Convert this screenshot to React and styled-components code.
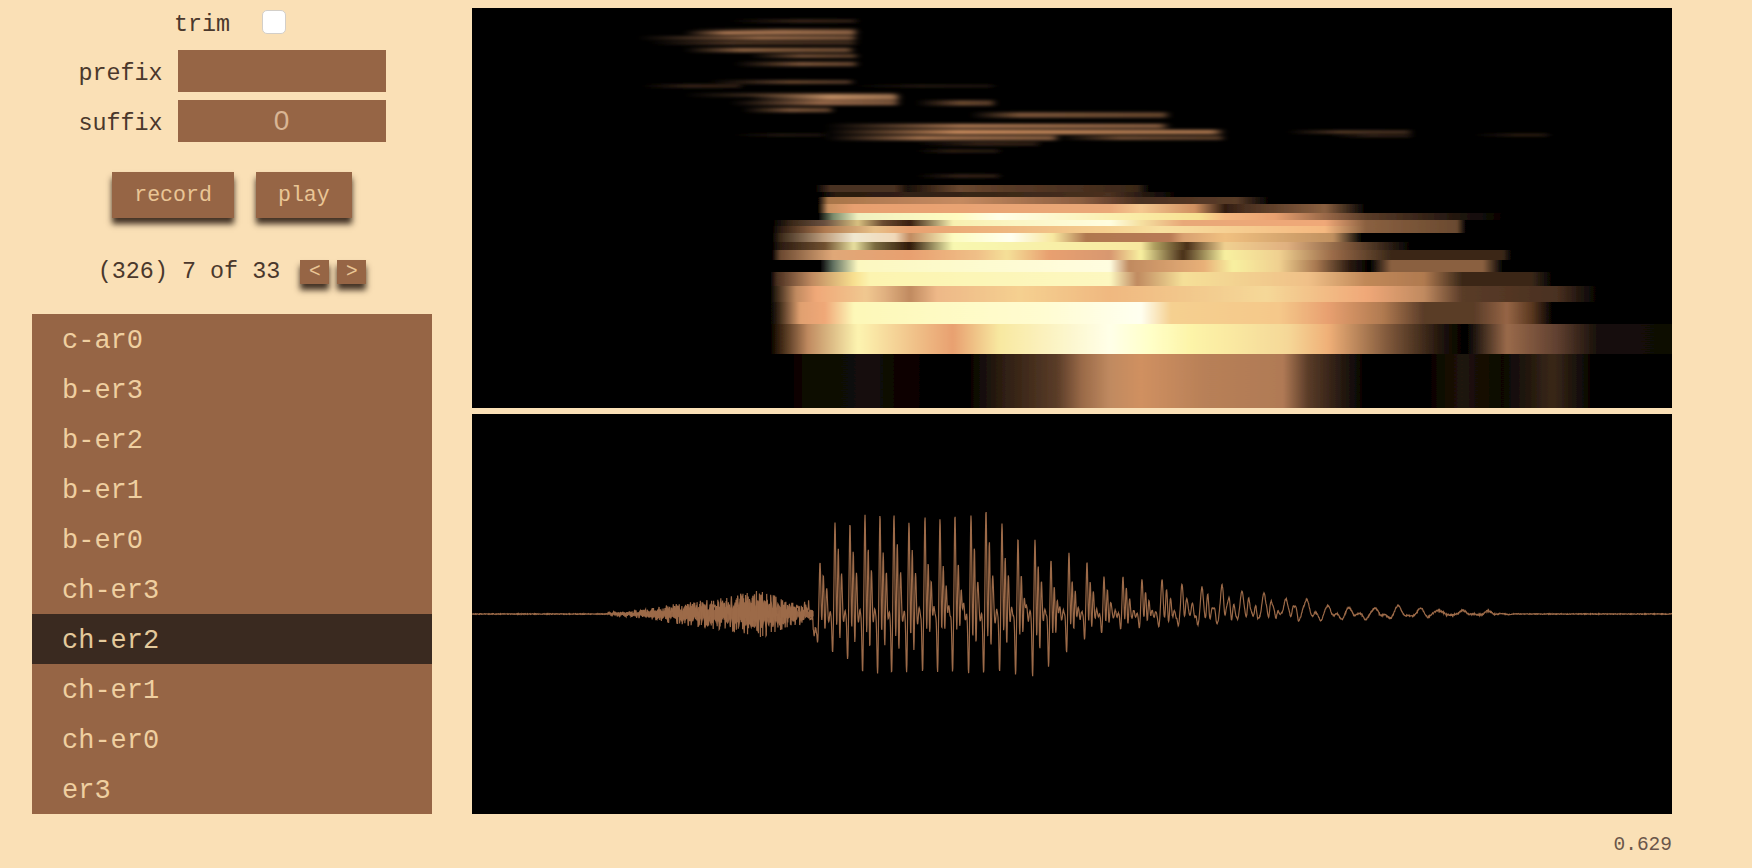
import React, { useMemo } from "react";
import styled, { createGlobalStyle } from "styled-components";

const GlobalStyle = createGlobalStyle`
  html, body {
    margin: 0;
    height: 100%;
    background: #fae0b6;
    overflow: hidden;
  }
  body {
    font-family: "Liberation Mono", monospace;
    color: #4a382c;
  }
`;

const Page = styled.div`
  display: flex;
  width: 1752px;
  height: 868px;
`;

const Sidebar = styled.aside`
  flex: none;
  width: 472px;
  box-sizing: border-box;
  padding: 10px 40px 0 32px;
  display: flex;
  flex-direction: column;
  align-items: stretch;
`;

const TrimRow = styled.label`
  display: flex;
  align-items: center;
  justify-content: center;
  gap: 32px;
  height: 24px;
  padding-right: 4px;
  font-size: 23.4px;
`;

const LabelText = styled.span`
  padding-top: 5px;
`;

const Check = styled.input.attrs({ type: "checkbox" })`
  appearance: none;
  box-sizing: border-box;
  width: 24px;
  height: 24px;
  margin: 0;
  background: #fff;
  border: 1px solid #d3cfc9;
  border-radius: 5px;
`;

const Fields = styled.div`
  display: flex;
  flex-direction: column;
  gap: 8px;
  margin-top: 16px;
`;

const FieldRow = styled.label`
  display: flex;
  align-items: center;
  justify-content: center;
  gap: 15px;
  font-size: 23.4px;
`;

const FieldInput = styled.input`
  box-sizing: border-box;
  width: 208px;
  height: 42px;
  border: 0;
  outline: 0;
  padding: 0;
  background: #966545;
  color: #f5d8ab;
  text-align: center;
  font-family: "Liberation Sans", sans-serif;
  font-size: 28px;
  &::placeholder {
    color: #d9b594;
    opacity: 1;
  }
`;

const Actions = styled.div`
  display: flex;
  justify-content: center;
  gap: 22px;
  margin-top: 30px;
`;

const Button = styled.button`
  height: ${(p) => (p.$small ? "24px" : "46px")};
  width: ${(p) => (p.$small ? "29px" : "auto")};
  padding: ${(p) => (p.$small ? "0" : "0 22px")};
  border: 0;
  background: #966545;
  color: #eac595;
  font-family: inherit;
  font-size: ${(p) => (p.$small ? "19.5px" : "21.6px")};
  box-shadow: 0 6px 6px rgba(45, 30, 20, 0.9);
`;

const Pager = styled.div`
  display: flex;
  align-items: center;
  justify-content: center;
  gap: 8px;
  height: 24px;
  margin-top: 42px;
  font-size: 23.4px;
`;

const PagerText = styled.span`
  margin-right: 12px;
`;

const List = styled.ul`
  list-style: none;
  margin: 30px 0 0;
  padding: 0;
  height: 500px;
  overflow: hidden;
  background: #966545;
`;

const Item = styled.li`
  height: 50px;
  line-height: 54px;
  padding-left: 30px;
  font-size: 27px;
  color: ${(p) => (p.$selected ? "#e3c99b" : "#efcfa0")};
  background: ${(p) => (p.$selected ? "#3a2a20" : "transparent")};
`;

const Main = styled.main`
  flex: none;
  width: 1200px;
  padding-top: 8px;
  display: flex;
  flex-direction: column;
  gap: 6px;
`;

const Plot = styled.svg`
  display: block;
  width: 1200px;
  height: 400px;
  background: #000;
`;

const Time = styled.div`
  margin-top: 14px;
  text-align: right;
  font-size: 19.5px;
  color: #6a564a;
`;

// page coordinates, [x, colour] per band; y runs top to bottom of the block
const BANDS = [
  [185, 7, [[815, "#000"], [830, "#4a3020"], [895, "#4a3020"], [908, "#1a1008"], [960, "#6b4830"], [1000, "#5a3c28"], [1080, "#4a3020"], [1137, "#3a2818"], [1150, "#000"]]],
  [192, 5, [[820, "#000"], [835, "#2a1a10"], [1000, "#3a2818"], [1110, "#4a3020"], [1180, "#000"]]],
  [197, 7, [[818, "#000"], [828, "#a87548"], [900, "#b88058"], [960, "#c58a60"], [1082, "#8a5d40"], [1110, "#6b4530"], [1140, "#4a3020"], [1236, "#5a3c28"], [1270, "#000"]]],
  [204, 9, [[818, "#000"], [828, "#c99060"], [854, "#e8a070"], [1110, "#eaa878"], [1141, "#f5c890"], [1195, "#d09060"], [1225, "#301c10"], [1245, "#4a3020"], [1325, "#8a6040"], [1366, "#000"]]],
  [213, 7, [[818, "#000"], [833, "#7a8a6a"], [858, "#f0f0c0"], [957, "#fffcc0"], [999, "#fffee8"], [1110, "#fbf0b0"], [1200, "#f8e090"], [1225, "#f5b880"], [1275, "#e8a070"], [1366, "#5a3c28"], [1495, "#0a0604"], [1510, "#000"]]],
  [220, 6, [[772, "#000"], [792, "#3a2818"], [825, "#6a5040"], [858, "#d8c080"], [883, "#6a4a30"], [910, "#3a2010"], [953, "#f8f0b0"], [1110, "#fffee0"], [1141, "#f5e0a0"], [1183, "#e8a878"], [1325, "#f0a878"], [1366, "#8a6040"], [1457, "#6a4a30"], [1466, "#000"]]],
  [226, 7, [[772, "#000"], [780, "#2a1a10"], [825, "#b07a50"], [875, "#e8c088"], [910, "#e8a070"], [1110, "#f5d090"], [1160, "#f8e0a0"], [1325, "#f5b880"], [1366, "#8a6040"], [1457, "#6a4a30"], [1466, "#000"]]],
  [233, 9, [[772, "#000"], [780, "#3a2818"], [825, "#c0a080"], [854, "#f0e8d0"], [895, "#f0d8b8"], [910, "#c08a60"], [953, "#fdfcc0"], [1011, "#fffff0"], [1053, "#f8e8a0"], [1086, "#b07850"], [1170, "#b87a55"], [1183, "#d8a070"], [1225, "#f0c080"], [1333, "#c09060"], [1362, "#000"]]],
  [242, 8, [[772, "#000"], [780, "#2a1a10"], [825, "#705030"], [854, "#e8e0a0"], [875, "#7a6a40"], [910, "#301808"], [953, "#f8f8b0"], [1141, "#f8e8a0"], [1154, "#b0a060"], [1187, "#4a3018"], [1225, "#f0d090"], [1287, "#e0b080"], [1350, "#7a5438"], [1412, "#000"]]],
  [250, 10, [[772, "#000"], [780, "#6a4830"], [833, "#e0a878"], [910, "#e8a070"], [978, "#f0c088"], [1007, "#f5e098"], [1049, "#e8a070"], [1110, "#d89870"], [1141, "#f8f0a0"], [1183, "#4a3018"], [1225, "#f8f0a0"], [1279, "#f0d090"], [1333, "#9a6a48"], [1391, "#3a2818"], [1503, "#3a2818"], [1512, "#000"]]],
  [260, 12, [[820, "#000"], [833, "#607060"], [858, "#fcf8c0"], [1110, "#fffde0"], [1129, "#c08a60"], [1204, "#e8b078"], [1233, "#f8f0a0"], [1279, "#f0d090"], [1316, "#a87850"], [1350, "#2a1a10"], [1370, "#000"], [1391, "#8a6040"], [1483, "#8a6040"], [1503, "#000"]]],
  [272, 14, [[770, "#000"], [777, "#4a3020"], [812, "#c08a60"], [854, "#f8e090"], [870, "#fcf4b0"], [1110, "#fdf8c0"], [1137, "#c08a60"], [1183, "#f5e098"], [1308, "#f0c088"], [1366, "#c08858"], [1424, "#b07a50"], [1462, "#3a2818"], [1532, "#3a2818"], [1553, "#000"]]],
  [286, 16, [[770, "#000"], [777, "#3a2818"], [796, "#c08a60"], [816, "#f0a878"], [866, "#f0c890"], [885, "#e0b080"], [910, "#c08a60"], [937, "#eeb888"], [1020, "#f5d090"], [1110, "#f0b880"], [1266, "#f5d898"], [1366, "#f0a878"], [1424, "#c08a60"], [1462, "#5a3c28"], [1557, "#4a3020"], [1599, "#000"]]],
  [302, 22, [[770, "#000"], [779, "#3a2818"], [800, "#e0a070"], [825, "#f0a878"], [854, "#fdf8b8"], [1040, "#fffcd0"], [1141, "#fffff0"], [1171, "#f5d090"], [1279, "#f5c88a"], [1328, "#e8a070"], [1383, "#b07a50"], [1424, "#5a3c28"], [1474, "#5a3c28"], [1507, "#966545"], [1532, "#5a3820"], [1553, "#000"]]],
  [324, 30, [[770, "#000"], [777, "#2a1808"], [808, "#c08a60"], [858, "#fdf4b0"], [916, "#f0c088"], [953, "#e8a070"], [999, "#f8e8a0"], [1110, "#ffffe8"], [1150, "#ffffc8"], [1191, "#fdf4a8"], [1287, "#f5d898"], [1328, "#f0b078"], [1391, "#7a5438"], [1445, "#1a1008"], [1466, "#000"], [1507, "#9a6a4a"], [1557, "#604030"], [1599, "#150e08"], [1672, "#100a06"]]],
  [354, 54, [[777, "#000"], [808, "#0c0805"], [875, "#140e08"], [895, "#0a0604"], [966, "#000"], [999, "#2a1c10"], [1057, "#5a3c28"], [1082, "#9a6a48"], [1110, "#c08a60"], [1141, "#d09060"], [1204, "#b88058"], [1283, "#b07a55"], [1308, "#5a3c28"], [1366, "#000"], [1424, "#000"], [1462, "#201408"], [1503, "#0a0604"], [1553, "#3a2818"], [1595, "#000"]]],
];

// soft formant streaks above the block: y, height, x start, x peak, x end, colour
const STREAKS = [
  [21, 1.5, 729, 800, 858, "#4a3020"],
  [30, 1.5, 690, 780, 858, "#6a4830"],
  [33, 2, 684, 725, 858, "#b88058"],
  [38, 2, 638, 760, 858, "#a87550"],
  [43, 1.5, 650, 730, 858, "#6a4830"],
  [50, 2.5, 684, 740, 854, "#8a6040"],
  [56, 2, 750, 800, 858, "#7a5438"],
  [64, 2.5, 734, 800, 858, "#7a5438"],
  [82, 2, 709, 790, 854, "#6a4830"],
  [86, 1.5, 642, 690, 742, "#4a3020"],
  [86, 1, 854, 920, 995, "#3a2818"],
  [95, 2, 684, 830, 900, "#8a6040"],
  [98, 2.5, 750, 830, 900, "#b58058"],
  [103, 2.5, 730, 820, 900, "#9a6a4a"],
  [103, 3, 916, 960, 995, "#6a4830"],
  [110, 2.5, 742, 790, 833, "#7a5438"],
  [115, 3, 970, 1020, 1170, "#7a5438"],
  [126, 2.5, 825, 960, 1170, "#a87550"],
  [132, 2.5, 825, 957, 1225, "#d09060"],
  [135, 1, 734, 780, 825, "#3a2818"],
  [138, 2.5, 825, 920, 1060, "#a87550"],
  [138, 2, 1060, 1120, 1225, "#7a5438"],
  [144, 1.5, 916, 980, 1040, "#4a3020"],
  [151, 1.5, 916, 950, 1000, "#3a2818"],
  [132, 1.5, 1287, 1340, 1412, "#6a4830"],
  [136, 1, 1330, 1370, 1412, "#4a3020"],
  [135, 1, 1474, 1520, 1549, "#4a3020"],
  [176, 1.5, 916, 960, 1000, "#4a3020"],
];

const Spectrogram = () => (
  <Plot viewBox="472 8 1200 400">
    <defs>
      <filter id="soft" x="-5%" y="-50%" width="110%" height="200%">
        <feGaussianBlur stdDeviation="3.5 1.5" />
      </filter>
      <filter id="edge" x="0" y="0" width="100%" height="100%">
        <feGaussianBlur stdDeviation="1 0.6" />
      </filter>
      {BANDS.map(([y, h, stops], i) => (
        <linearGradient key={i} id={`band${i}`} gradientUnits="userSpaceOnUse" x1="472" x2="1672" y1="0" y2="0">
          {stops.map(([x, c], j) => (
            <stop key={j} offset={(x - 472) / 1200} stopColor={c} />
          ))}
        </linearGradient>
      ))}
      {STREAKS.map(([y, h, a, b, c, col], i) => (
        <linearGradient key={i} id={`streak${i}`} gradientUnits="userSpaceOnUse" x1={a} x2={c} y1="0" y2="0">
          <stop offset="0" stopColor={col} stopOpacity="0" />
          <stop offset={(b - a) / (c - a)} stopColor={col} />
          <stop offset="0.97" stopColor={col} stopOpacity="0.8" />
          <stop offset="1" stopColor={col} stopOpacity="0" />
        </linearGradient>
      ))}
    </defs>
    <g filter="url(#soft)">
      {STREAKS.map(([y, h, a, b, c], i) => (
        <rect key={i} x={a} y={y - h * 0.9} width={c - a} height={h * 1.8} fill={`url(#streak${i})`} style={{ mixBlendMode: "screen" }} />
      ))}
    </g>
    <g filter="url(#edge)">
      {BANDS.map(([y, h], i) => (
        <rect key={i} x="472" y={y} width="1200" height={h} fill={`url(#band${i})`} />
      ))}
    </g>
  </Plot>
);

const PEAKS = [
  [820, 561], [835, 522], [850, 523], [865, 515], [880, 515], [894, 515], [909, 522], [925, 517], [940, 519],
  [955, 515], [971, 515], [986, 510], [1002, 523], [1018, 538], [1035, 540], [1051, 560], [1069, 553],
  [1087, 562], [1104, 577], [1123, 577], [1142, 579], [1162, 579], [1182, 584], [1202, 587], [1222, 585],
  [1242, 591], [1264, 593], [1286, 599], [1307, 600], [1328, 606], [1349, 608], [1375, 608], [1398, 606],
  [1420, 608], [1439, 609], [1462, 610], [1488, 611],
];
const DIPS = [[820, 20], [835, 38], [850, 45], [865, 58], [880, 60], [900, 58], [960, 60], [1000, 58], [1030, 65], [1061, 48], [1078, 30], [1093, 22], [1126, 15], [1200, 11], [1250, 7], [1340, 4], [1400, 3.5], [1480, 1], [1672, 0]];
const BURST = [[608, 2], [640, 4], [680, 11], [720, 16], [760, 24], [790, 13], [812, 6], [818, 0], [1672, 0]];

const lerp = (table, x) => {
  if (x <= table[0][0]) return table[0][0] === x ? table[0][1] : 0;
  for (let i = 1; i < table.length; i++) {
    if (x <= table[i][0]) {
      const [x0, y0] = table[i - 1];
      const [x1, y1] = table[i];
      return y0 + ((y1 - y0) * (x - x0)) / (x1 - x0);
    }
  }
  return 0;
};

const bump = (d, w) => Math.exp(-(d * d) / (2 * w * w));

const makeRand = (start) => {
  let seed = start;
  return () => {
    seed = (seed * 16807) % 2147483647;
    return seed / 2147483647 - 0.5;
  };
};

const buildWave = () => {
  const rand = makeRand(4242);
  const pulses = PEAKS.map(([x, y]) => ({ x, a: 614 - y, b: lerp(DIPS, x) }));
  let d = "";
  for (let x = 472; x <= 1672; x += 0.33) {
    let y = 614 + rand() * lerp(BURST, x) * 2;
    y += 16 * bump(x - 815, 2.2) - 8 * bump(x - 808, 2);
    let web = 0;
    let nearest = 99;
    for (const p of pulses) {
      const dx = x - p.x;
      nearest = Math.min(nearest, Math.abs(dx), Math.abs(dx + 3.2));
      if (Math.abs(dx) > 40) continue;
      const s = 0.75 + Math.min(2.4, Math.max(0, (p.x - 1130) / 130));
      const late = p.x > 1300 ? 0.2 : 1;
      y -= p.a * bump(dx, s);
      y -= 0.62 * late * p.a * bump(dx - 4.4 * s, s * 0.9);
      y -= 0.34 * late * p.a * bump(dx - 8.5 * s, s);
      y += p.b * bump(dx + 3.2 * s, s * 0.9);
      y += 0.5 * p.b * bump(dx - 2.3 * s, s * 0.7);
      y += 0.55 * p.b * bump(dx - 6.5 * s, s * 0.8);
      web = Math.max(web, p.a * 0.14 * bump(dx, 14));
    }
    // keeps the extremes of each pulse where they were measured
    y += web * Math.sin(x * 1.7) * (x > 1300 ? 0.3 : 1) * (1 - bump(nearest, 2));
    y += rand() * (x > 818 && x < 1500 ? 1.4 : 0.7);
    d += `${d ? "L" : "M"}${x.toFixed(2)} ${y.toFixed(2)}`;
  }
  return d;
};

// the solid middle of the noise burst before the voiced part
const buildBurst = () => {
  const rand = makeRand(977);
  const top = [];
  const bottom = [];
  for (let x = 612; x <= 814; x += 1.2) {
    const env = lerp(BURST, x);
    top.push(`${x.toFixed(1)} ${(614 - env * (0.45 + rand() * 0.5)).toFixed(1)}`);
    bottom.unshift(`${x.toFixed(1)} ${(614 + env * (0.45 + rand() * 0.5)).toFixed(1)}`);
  }
  return `M${top.join("L")}L${bottom.join("L")}Z`;
};

const Waveform = () => {
  const line = useMemo(buildWave, []);
  const burst = useMemo(buildBurst, []);
  return (
    <Plot viewBox="472 414 1200 400">
      <path d={burst} fill="#966545" />
      <path d={line} fill="none" stroke="#9c6a48" strokeWidth="1.2" />
    </Plot>
  );
};

const ITEMS = ["c-ar0", "b-er3", "b-er2", "b-er1", "b-er0", "ch-er3", "ch-er2", "ch-er1", "ch-er0", "er3"];

export default function App() {
  return (
    <Page>
      <GlobalStyle />
      <Sidebar>
        <TrimRow>
          <LabelText>trim</LabelText>
          <Check />
        </TrimRow>
        <Fields>
          <FieldRow>
            <LabelText>prefix</LabelText>
            <FieldInput />
          </FieldRow>
          <FieldRow>
            <LabelText>suffix</LabelText>
            <FieldInput placeholder="0" />
          </FieldRow>
        </Fields>
        <Actions>
          <Button>record</Button>
          <Button>play</Button>
        </Actions>
        <Pager>
          <PagerText>(326) 7 of 33</PagerText>
          <Button $small>&lt;</Button>
          <Button $small>&gt;</Button>
        </Pager>
        <List>
          {ITEMS.map((name) => (
            <Item key={name} $selected={name === "ch-er2"}>
              {name}
            </Item>
          ))}
        </List>
      </Sidebar>
      <Main>
        <Spectrogram />
        <Waveform />
        <Time>0.629</Time>
      </Main>
    </Page>
  );
}
